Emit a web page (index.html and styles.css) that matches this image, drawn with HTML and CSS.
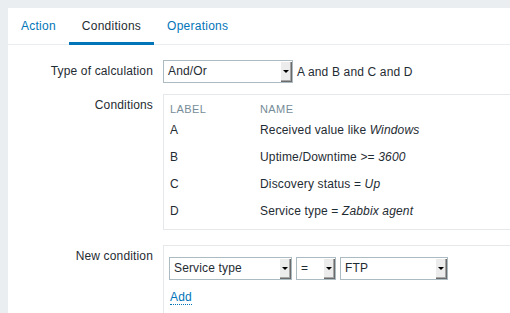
FILE: index.html
```html
<!DOCTYPE html>
<html lang="en">

<head>
  <meta charset="UTF-8">
  <meta name="viewport" content="width=device-width, initial-scale=1.0">
  <title>Action conditions</title>
  <link rel="stylesheet" href="styles.css">
</head>

<body>
  <div class="panel">
    <ul class="tabs">
      <li><a href="#">Action</a></li>
      <li class="active"><a href="#">Conditions</a></li>
      <li><a href="#">Operations</a></li>
    </ul>

    <div class="form">
      <div class="form-row">
        <div class="form-label label-mid">Type of calculation</div>
        <div class="form-field calc">
          <div class="select select-calc">
            <span class="select-text">And/Or</span>
            <span class="select-btn"><i></i></span>
          </div>
          <span class="calc-formula">A and B and C and D</span>
        </div>
      </div>

      <div class="form-row">
        <div class="form-label">Conditions</div>
        <div class="form-field box">
          <table class="cond-table">
            <thead>
              <tr>
                <th class="col-label">Label</th>
                <th>Name</th>
              </tr>
            </thead>
            <tbody>
              <tr>
                <td>A</td>
                <td>Received value like <em>Windows</em></td>
              </tr>
              <tr>
                <td>B</td>
                <td>Uptime/Downtime &gt;= <em>3600</em></td>
              </tr>
              <tr>
                <td>C</td>
                <td>Discovery status = <em>Up</em></td>
              </tr>
              <tr>
                <td>D</td>
                <td>Service type = <em>Zabbix agent</em></td>
              </tr>
            </tbody>
          </table>
        </div>
      </div>

      <div class="form-row">
        <div class="form-label">New condition</div>
        <div class="form-field box box-new">
          <div class="select-group">
            <div class="select select-type">
              <span class="select-text">Service type</span>
              <span class="select-btn"><i></i></span>
            </div>
            <div class="select select-op">
              <span class="select-text">=</span>
              <span class="select-btn"><i></i></span>
            </div>
            <div class="select select-value">
              <span class="select-text">FTP</span>
              <span class="select-btn"><i></i></span>
            </div>
          </div>
          <a href="#" class="add-link">Add</a>
        </div>
      </div>
    </div>
  </div>
</body>

</html>
```

FILE: styles.css
```css
* {
  padding: 0;
  margin: 0;
  box-sizing: border-box;
}

body {
  background: #ebeef0;
  font-family: "Liberation Sans", Arial, sans-serif;
  font-size: 12px;
  line-height: 14px;
  letter-spacing: 0.15px;
  color: #1f2c33;
  overflow: hidden;
}

a {
  color: #0275b8;
  text-decoration: none;
}

.panel {
  margin: 8px 0 0 8px;
  width: 540px;
  height: 320px;
  background: #fff;
}

/* tabs */
.tabs {
  display: flex;
  list-style: none;
  border-bottom: 1px solid #ebeef0;
}

.tabs li {
  height: 37px;
  margin-bottom: -1px;
  padding: 0 13px;
  line-height: 36px;
  letter-spacing: 0.25px;
}

.tabs li.active {
  box-shadow: inset 0 -3px 0 #0275b8;
}

.tabs li.active a {
  color: #1f2c33;
}

/* form */
.form {
  padding-top: 15px;
}

.form-row {
  display: grid;
  grid-template-columns: 145px 1fr;
  column-gap: 10px;
}

.form-row + .form-row {
  margin-top: 11px;
}

.form-row:last-child {
  margin-top: 15px;
}

.form-label {
  text-align: right;
  padding-top: 4px;
}

.form-label.label-mid {
  padding-top: 0;
  line-height: 23px;
}

.calc {
  display: flex;
  align-items: center;
  column-gap: 4px;
}

.box {
  border: 1px solid #e5e9eb;
  border-right: none;
}

/* selects */
.select {
  display: flex;
  height: 23px;
  border: 1px solid #acbbc2;
  background: #fff;
}

.select-text {
  flex: 1;
  padding-left: 4px;
  line-height: 21px;
  white-space: nowrap;
}

.select-btn {
  width: 12px;
  display: flex;
  align-items: center;
  justify-content: center;
  background: #ececec;
  box-shadow: inset 1px 1px 0 #fff, inset -1px -1px 0 #6b6b6b, inset -2px -2px 0 #a6a6a6;
}

.select-btn i {
  display: block;
  width: 0;
  height: 0;
  margin: 0 1px 1px 0;
  border-left: 3px solid transparent;
  border-right: 3px solid transparent;
  border-top: 3px solid #000;
}

.select-calc {
  width: 130px;
}

.select-type {
  width: 123px;
}

.select-op {
  width: 40px;
}

.select-value {
  width: 108px;
}

/* conditions list */
.cond-table {
  border-collapse: collapse;
  margin-left: 6px;
  margin-bottom: 5px;
}

.cond-table th {
  height: 21px;
  padding-top: 7px;
  vertical-align: top;
  text-align: left;
  font-size: 11px;
  font-weight: normal;
  text-transform: uppercase;
  letter-spacing: 0.4px;
  color: #768d99;
}

.cond-table .col-label {
  width: 90px;
}

.cond-table td {
  height: 27px;
  vertical-align: middle;
}

/* new condition */
.box-new {
  padding: 11px 0 20px 5px;
}

.select-group {
  display: flex;
  column-gap: 4px;
}

.add-link {
  display: inline-block;
  margin: 10px 0 0 1px;
  border-bottom: 1px dotted #0275b8;
}
```
